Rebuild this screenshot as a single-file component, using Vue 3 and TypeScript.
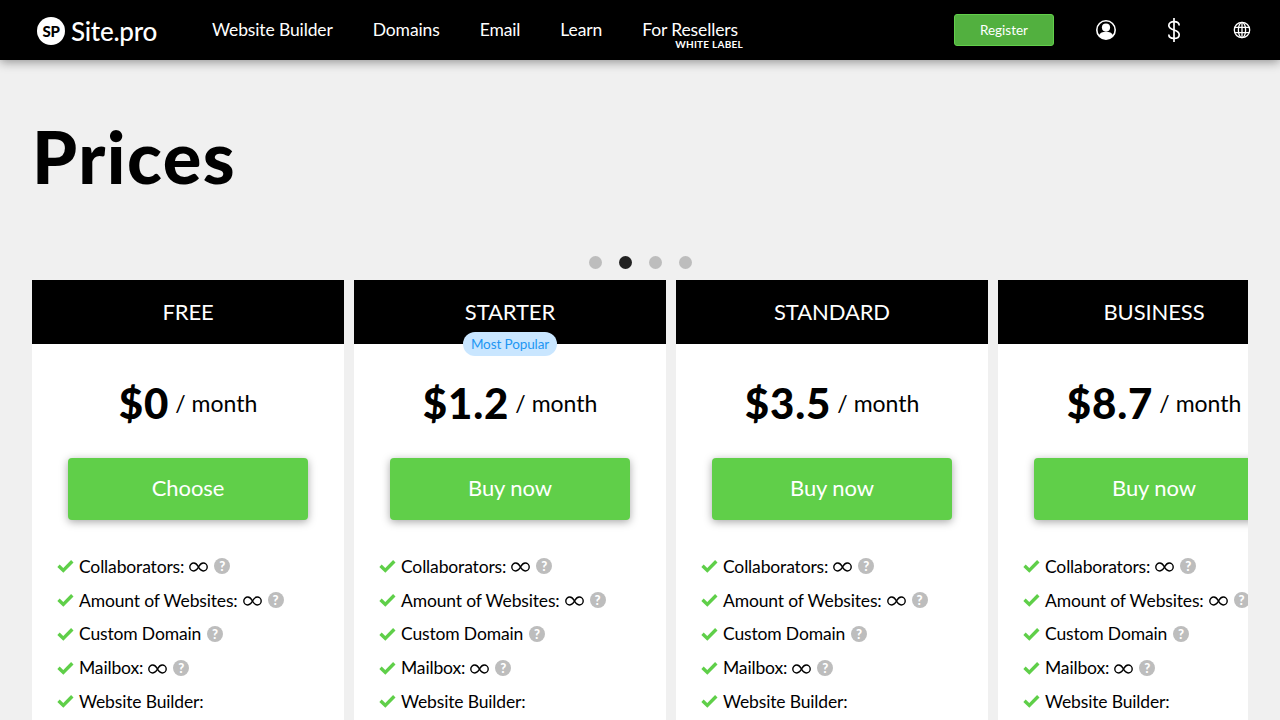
<template>
  <div class="page">
    <header class="topbar">
      <a class="logo">
        <span class="logo-mark">SP</span>
        <span class="logo-name">Site.pro</span>
      </a>
      <nav class="nav">
        <a v-for="item in navItems" :key="item" class="nav-item">
          {{ item }}
          <span v-if="item === 'For Resellers'" class="nav-tag">WHITE LABEL</span>
        </a>
      </nav>
      <div class="actions">
        <button class="register">Register</button>
        <span class="action-icon">
          <svg width="22" height="22" viewBox="0 0 22 22">
            <circle cx="11" cy="11" r="9.2" fill="#000" stroke="#fff" stroke-width="1.6" />
            <circle cx="11" cy="8.6" r="4.1" fill="#fff" />
            <path d="M3.8 16.5c1.4-2.8 3.6-3.8 7.2-3.8s5.800 1 7.200 3.800a9 9 0 0 1-14.400 0z" fill="#fff" />
          </svg>
        </span>
        <span class="action-icon">
          <svg width="14" height="26" viewBox="0 0 14 26" fill="none" stroke="#fff" stroke-width="1.7">
            <path d="M7 1v24" />
            <path d="M12.200 8.500C12.200 5.800 10 4.600 7 4.600S1.800 6 1.800 8.500 4 12 7 13s5.200 2.200 5.200 4.700S10 21.400 7 21.400s-5.200-1.300-5.200-3.900" />
          </svg>
        </span>
        <span class="action-icon">
          <svg width="18" height="18" viewBox="0 0 18 18" fill="none" stroke="#fff" stroke-width="1.3">
            <circle cx="9" cy="9" r="7.7" />
            <ellipse cx="9" cy="9" rx="3.6" ry="7.7" />
            <path d="M1.700 6.300h14.600M1.700 11.700h14.600M9 1.300v15.400" />
          </svg>
        </span>
      </div>
    </header>

    <main class="content">
      <h1 class="title">Prices</h1>
      <div class="dots">
        <span v-for="n in 4" :key="n" class="dot" :class="{ active: n === 2 }" />
      </div>
      <div class="plans">
        <section v-for="plan in plans" :key="plan.name" class="plan">
          <div class="plan-head">
            {{ plan.name }}
            <span v-if="plan.popular" class="popular">Most Popular</span>
          </div>
          <div class="plan-price">
            <strong>{{ plan.price }}</strong>
            <span>/ month</span>
          </div>
          <button class="buy">{{ plan.action }}</button>
          <ul class="features">
            <li v-for="f in features" :key="f.label">
              <svg class="check" width="17" height="14" viewBox="0 0 17 14">
                <path d="M1.500 6.800l4.800 4.600 9-9.200" fill="none" stroke="#5fcf49" stroke-width="3.400" />
              </svg>
              <span>{{ f.label }}</span>
              <svg v-if="f.infinite" class="infinity" width="19" height="10" viewBox="0 0 19 10">
                <path
                  d="M9.500 5C8 2.200 6.700 1 4.800 1a4 4 0 0 0 0 8C6.700 9 8 7.800 9.500 5s2.800-4 4.700-4a4 4 0 0 1 0 8C12.300 9 11 7.800 9.500 5z"
                  fill="none"
                  stroke="#000"
                  stroke-width="1.400" />
              </svg>
              <span v-if="f.help" class="help">?</span>
            </li>
          </ul>
        </section>
      </div>
    </main>
  </div>
</template>

<script setup lang="ts">
interface Plan {
  name: string;
  price: string;
  action: string;
  popular?: boolean;
}

const navItems = ['Website Builder', 'Domains', 'Email', 'Learn', 'For Resellers'];

const plans: Plan[] = [
  { name: 'FREE', price: '$0', action: 'Choose' },
  { name: 'STARTER', price: '$1.2', action: 'Buy now', popular: true },
  { name: 'STANDARD', price: '$3.5', action: 'Buy now' },
  { name: 'BUSINESS', price: '$8.7', action: 'Buy now' },
];

const features = [
  { label: 'Collaborators:', infinite: true, help: true },
  { label: 'Amount of Websites:', infinite: true, help: true },
  { label: 'Custom Domain', infinite: false, help: true },
  { label: 'Mailbox:', infinite: true, help: true },
  { label: 'Website Builder:', infinite: false, help: false },
];
</script>

<style>
html {
  scrollbar-width: none;
}
body {
  background: #f0f0f0;
}
</style>

<style scoped>
.page {
  font-family: Lato, "Noto Sans", sans-serif;
  color: #000;
}

.topbar {
  height: 60px;
  background: #000;
  color: #fff;
  display: flex;
  align-items: center;
  box-shadow: 0 2px 10px rgba(0, 0, 0, 0.4);
  padding-left: 37px;
}

.logo {
  display: flex;
  align-items: center;
  gap: 6px;
  width: 175px;
}

.logo-mark {
  width: 28px;
  height: 28px;
  border-radius: 50%;
  background: #fff;
  color: #000;
  font-size: 15px;
  font-weight: 900;
  letter-spacing: -0.3px;
  display: flex;
  align-items: center;
  justify-content: center;
  margin-top: 2px;
}

.logo-name {
  font-size: 26px;
  font-weight: 500;
  letter-spacing: -0.25px;
  margin-top: 2px;
}

.nav {
  display: flex;
  gap: 40px;
  font-size: 17.5px;
  letter-spacing: -0.12px;
  margin-top: -2px;
}

.nav-item {
  position: relative;
  white-space: nowrap;
}

.nav-tag {
  position: absolute;
  right: -5px;
  top: 19px;
  font-size: 10px;
  font-weight: 700;
  letter-spacing: 0.25px;
}

.actions {
  margin-left: auto;
  display: flex;
  align-items: center;
  padding-right: 4px;
}

.register {
  width: 100px;
  height: 32px;
  margin-right: 18px;
  background: #52b03f;
  border: 1px solid #62cf4b;
  border-radius: 3px;
  color: #fff;
  font: inherit;
  font-size: 13.5px;
  padding: 0;
}

.action-icon {
  width: 68px;
  display: flex;
  justify-content: center;
  align-items: center;
}

.content {
  padding: 0 32px;
}

.title {
  margin: 0;
  padding-top: 53px;
  height: 188px;
  box-sizing: border-box;
  font-size: 72px;
  line-height: 86px;
  font-weight: 900;
  letter-spacing: 1.5px;
}

.dots {
  display: flex;
  justify-content: center;
  gap: 17px;
  height: 32px;
  align-items: flex-start;
  padding: 8px 0 0 1px;
  box-sizing: border-box;
}

.dot {
  width: 13px;
  height: 13px;
  border-radius: 50%;
  background: #bdbdbd;
}

.dot.active {
  background: #222;
}

.plans {
  display: flex;
  gap: 10px;
  overflow: hidden;
}

.plan {
  flex: 0 0 312px;
  background: #fff;
}

.plan-head {
  position: relative;
  height: 64px;
  background: #000;
  color: #fff;
  font-size: 22px;
  letter-spacing: -0.1px;
  line-height: 64px;
  text-align: center;
}

.popular {
  position: absolute;
  left: 50%;
  bottom: -12px;
  transform: translateX(-50%);
  width: 94px;
  height: 24px;
  border-radius: 12px;
  background: #c9e6ff;
  color: #2196f3;
  font-size: 13.5px;
  letter-spacing: -0.1px;
  line-height: 24px;
}

.plan-price {
  height: 114px;
  padding-top: 4px;
  box-sizing: border-box;
  display: flex;
  align-items: center;
  justify-content: center;
  gap: 6px;
  font-size: 23px;
}

.plan-price strong {
  font-size: 42px;
  font-weight: 900;
  letter-spacing: 0.9px;
}

.buy {
  display: block;
  width: 240px;
  height: 62px;
  margin: 0 auto;
  padding: 0 0 3px;
  background: #60cf49;
  border: 0;
  border-radius: 4px;
  box-shadow: 0 2px 8px rgba(0, 0, 0, 0.35);
  color: #fff;
  font: inherit;
  font-size: 22px;
  letter-spacing: -0.1px;
}

.features {
  list-style: none;
  margin: 29.5px 0 0;
  padding: 0 0 40px 25px;
  font-size: 17.5px;
  letter-spacing: -0.15px;
}

.features li {
  height: 33.75px;
  display: flex;
  align-items: center;
  white-space: nowrap;
}

.check {
  margin-right: 5px;
}

.infinity {
  margin: 2px 0 0 5px;
}

.help {
  width: 16px;
  height: 16px;
  margin-left: 6px;
  border-radius: 50%;
  background: #bdbdbd;
  color: #fff;
  font-size: 13px;
  font-weight: 900;
  letter-spacing: 0;
  line-height: 16px;
  text-align: center;
}
</style>
